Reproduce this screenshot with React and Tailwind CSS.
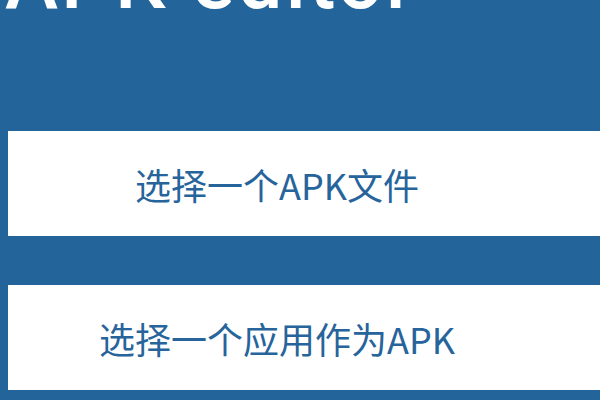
export default function App() {
  const buttons = ['选择一个APK文件', '选择一个应用作为APK'];

  return (
    <div className="w-[600px] h-[400px] overflow-hidden bg-[#23649b]">
      <h1
        className="-mt-[59px] pl-[5px] text-[80px] leading-[80px] font-medium tracking-[3px] text-white whitespace-nowrap"
        style={{ fontFamily: 'Roboto, "Noto Sans", sans-serif' }}
      >
        APK editor
      </h1>

      <div className="mt-[110px] flex flex-col gap-[49px]">
        {buttons.map((label) => (
          <div key={label} className="ml-[8px] w-[640px] h-[105px] bg-white flex items-center">
            <div
              className="w-[538px] flex justify-center text-[36px] text-[#26649b] whitespace-nowrap"
              style={{ fontFamily: '"Noto Sans CJK SC", "Noto Sans", sans-serif' }}
            >
              {label}
            </div>
          </div>
        ))}
      </div>
    </div>
  );
}
